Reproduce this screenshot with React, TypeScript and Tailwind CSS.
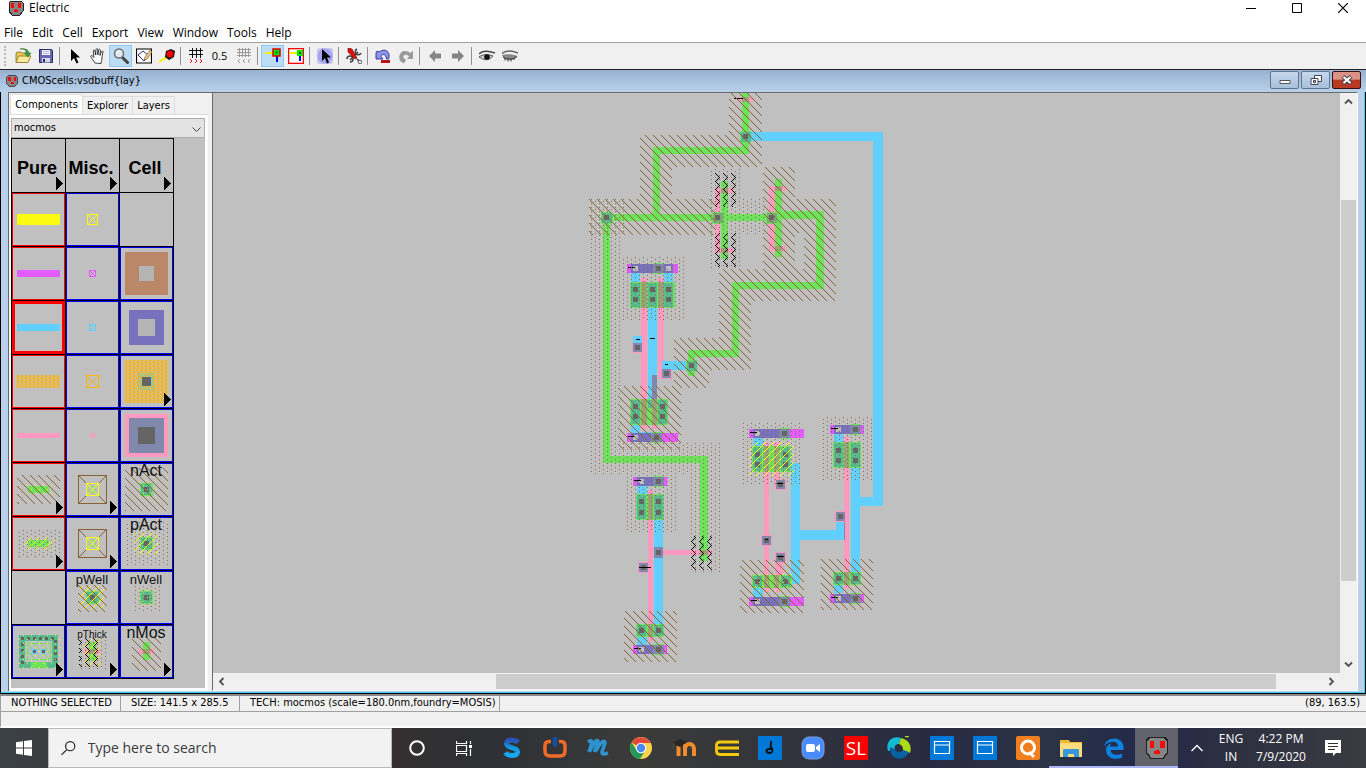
import React from "react";

type Box = [string, number, number, number, number];

const GREEN = "#6ee25c";
const CYAN = "#62d0ff";
const PINK = "#ff99c0";
const PURPLE = "#7872be";
const MAGENTA = "#e35cff";
const TEAL = "#57bb90";
const DARK = "#656565";
const LIGHT = "#bebebe";
const SLATE = "#8088ab";
const OLIVE = "#98a275";
const BLACK = "#000000";

/* Boxes are given as colour, left, top, right, bottom. */
function Boxes({ list }: { list: Box[] }) {
  return (
    <>
      {list.map(([fill, x1, y1, x2, y2], i) => (
        <rect key={i} fill={fill} x={x1} y={y1} width={x2 - x1} height={y2 - y1} />
      ))}
    </>
  );
}

function pixels(list: number[][]) {
  return list.map(([x, y]) => `M${x} ${y}h1v1h-1z`).join("");
}

const eight = [0, 1, 2, 3, 4, 5, 6, 7];
const hatchPath = pixels(eight.map((i) => [(6 + i) % 8, i]));
const slashPath = pixels(eight.map((i) => [(15 - i) % 8, i]));
const dotPath = pixels([[7, 3], [7, 7], [3, 1], [3, 5]]);
const sparsePath = pixels([[3, 2], [7, 6]]);
const zigPath = pixels([[3, 5], [4, 6], [5, 7], [6, 0], [7, 1], [6, 2], [5, 3], [4, 4]]);

function Patterns() {
  const defs: [string, string, string][] = [
    ["hatch", hatchPath, "#8a6230"],
    ["slash", slashPath, "#fbfb12"],
    ["dots", dotPath, "#8a6a48"],
    ["ydots", sparsePath, "#f4f41a"],
    ["zig", zigPath, "#000000"],
  ];
  return (
    <svg className="absolute size-0" aria-hidden="true">
      <defs>
        {defs.map(([id, d, fill]) => (
          <pattern key={id} id={id} width="8" height="8" patternUnits="userSpaceOnUse">
            <path d={d} fill={fill} shapeRendering="crispEdges" />
          </pattern>
        ))}
        <pattern id="orange" width="4" height="4" patternUnits="userSpaceOnUse">
          <path d="M1 0h2v4h-2z" fill="#ffb50a" shapeRendering="crispEdges" />
          <path d="M3 1h1v1h-1zM0 3h1v1h-1z" fill="#e8b648" shapeRendering="crispEdges" />
        </pattern>
      </defs>
    </svg>
  );
}

function contact(x: number, y: number, fill: string = TEAL): Box[] {
  return [
    [GREEN, x, y, x + 11, y + 12],
    [fill, x + 1, y + 1, x + 11, y + 11],
    [DARK, x + 3, y + 3, x + 8, y + 8],
  ];
}

function polyVia(x: number, y: number): Box[] {
  return [
    [PINK, x - 1, y - 1, x + 10, y + 10],
    [SLATE, x, y, x + 9, y + 9],
    [DARK, x + 2, y + 2, x + 7, y + 7],
  ];
}

/* A power rail: magenta bar, purple overlap, light via and dark via. */
function rail(x: number, y: number, right: number, purpleRight: number, via: number): Box[] {
  return [
    [MAGENTA, x, y, right, y + 9],
    [PURPLE, x + 4, y, purpleRight, y + 9],
    [GREEN, via - 3, y - 1, via + 8, y + 10],
    [SLATE, via - 3, y, via + 8, y + 9],
    [LIGHT, x + 6, y + 2, x + 11, y + 7],
    [DARK, via, y + 2, via + 5, y + 7],
    [BLACK, x + 1, y + 3, x + 8, y + 4],
  ];
}

function active(x: number, y: number, right: number, bottom: number, teal: number[], olive: number[][], rows: number[]): Box[] {
  const out: Box[] = [[GREEN, x, y, right, bottom]];
  teal.forEach((t) => out.push([TEAL, t, y + 1, t + 9, bottom - 1]));
  olive.forEach(([a, b]) => out.push([OLIVE, a, y, b, bottom]));
  teal.forEach((t) => rows.forEach((r) => out.push([DARK, t + 2, r, t + 7, r + 5])));
  return out;
}

const layout: Box[] = [
  [CYAN, 748, 132, 883, 141],
  [CYAN, 873, 132, 883, 506],
  [CYAN, 859, 497, 883, 506],
  [GREEN, 742, 93, 749, 154],
  [GREEN, 653, 147, 749, 154],
  [GREEN, 653, 147, 660, 221],
  [GREEN, 606, 214, 776, 221],
  [GREEN, 776, 211, 824, 219],
  [GREEN, 816, 211, 824, 289],
  [GREEN, 732, 282, 824, 289],
  [GREEN, 732, 282, 739, 357],
  [GREEN, 688, 350, 739, 357],
  [GREEN, 688, 350, 695, 376],
  [GREEN, 603, 214, 610, 463],
  [GREEN, 603, 456, 708, 463],
  [GREEN, 700, 456, 708, 561],
  [PINK, 739, 97, 753, 102],
  [OLIVE, 742, 97, 749, 102],
  [BLACK, 734, 98, 743, 99],
  [PINK, 715, 188, 720, 253],
  [PINK, 715, 188, 733, 193],
  [PINK, 715, 248, 733, 253],
  [GREEN, 721, 181, 728, 259],
  [OLIVE, 721, 188, 728, 193],
  [OLIVE, 721, 248, 728, 253],
  [PINK, 769, 186, 775, 251],
  [PINK, 769, 186, 786, 191],
  [PINK, 769, 246, 786, 251],
  [GREEN, 775, 179, 782, 257],
  [OLIVE, 775, 186, 782, 191],
  [OLIVE, 775, 246, 782, 251],
  ...contact(740, 131),
  ...contact(601, 212),
  ...contact(712, 212, "#7ea87c"),
  ...contact(766, 212, "#7ea87c"),

  [CYAN, 631, 273, 640, 282],
  [CYAN, 664, 273, 673, 282],
  [PINK, 641, 278, 647, 429],
  [PINK, 658, 278, 664, 379],
  [CYAN, 648, 307, 657, 400],
  ...rail(627, 264, 678, 673, 656),
  [LIGHT, 666, 266, 671, 271],
  ...active(630, 282, 675, 308, [631, 648, 664], [[641, 647], [658, 664]], [287, 297]),
  ...polyVia(633, 343),
  [CYAN, 633, 336, 642, 343],
  [BLACK, 636, 339, 640, 340],
  [BLACK, 650, 338, 655, 339],
  [CYAN, 662, 361, 688, 370],
  ...polyVia(662, 369),
  [CYAN, 662, 361, 672, 369],
  [BLACK, 665, 364, 668, 365],
  ...contact(686, 360),
  [SLATE, 652, 375, 657, 400],
  [CYAN, 631, 425, 640, 433],
  [PINK, 652, 425, 657, 429],
  [CYAN, 640, 432, 657, 433],
  ...active(630, 399, 668, 425, [631, 658], [[641, 647], [652, 657]], [404, 414]),
  [TEAL, 648, 400, 652, 408],
  ...rail(627, 433, 678, 661, 654),

  [CYAN, 637, 485, 647, 494],
  [PINK, 648, 490, 653, 641],
  [CYAN, 654, 520, 663, 624],
  ...rail(633, 477, 667, 653, 656),
  ...active(636, 494, 664, 520, [637, 654], [[648, 653]], [499, 510]),
  [PINK, 663, 550, 712, 555],
  [OLIVE, 700, 550, 708, 555],
  [SLATE, 654, 547, 663, 558],
  [DARK, 656, 550, 661, 555],
  ...polyVia(639, 563),
  [BLACK, 639, 567, 651, 568],
  [CYAN, 637, 637, 647, 645],
  ...active(636, 624, 664, 637, [637, 654], [[648, 653]], [628]),
  ...rail(633, 645, 667, 653, 656),

  [CYAN, 753, 438, 763, 446],
  [PINK, 764, 442, 769, 592],
  [PINK, 774, 442, 779, 487],
  ...rail(749, 429, 804, 790, 782),
  ...active(752, 446, 791, 472, [753, 781], [[764, 769], [774, 779]], [452, 462]),
  [CYAN, 791, 463, 800, 584],
  [CYAN, 800, 530, 844, 540],
  [CYAN, 836, 522, 844, 540],
  ...polyVia(776, 480),
  [BLACK, 777, 483, 784, 484],
  ...polyVia(762, 536),
  [BLACK, 765, 539, 768, 540],
  [PINK, 775, 562, 783, 576],
  [PINK, 775, 576, 779, 592],
  ...polyVia(776, 553),
  [BLACK, 777, 556, 784, 557],
  [CYAN, 753, 588, 763, 597],
  ...active(752, 575, 792, 588, [753, 781], [[764, 769], [774, 779]], [579]),
  ...rail(749, 597, 804, 790, 782),

  [CYAN, 834, 434, 843, 442],
  [PINK, 844, 437, 849, 589],
  [SLATE, 844, 522, 845, 540],
  ...rail(830, 425, 864, 850, 853),
  ...active(833, 442, 861, 468, [834, 851], [[844, 849]], [448, 458]),
  [CYAN, 851, 468, 860, 572],
  ...polyVia(836, 512),
  [CYAN, 834, 585, 843, 593],
  ...active(833, 572, 861, 585, [834, 851], [[844, 849]], [576]),
  ...rail(830, 594, 864, 850, 853),
];

const fills: Box[] = [
  ["url(#hatch)", 729, 93, 762, 135],
  ["url(#hatch)", 640, 135, 762, 167],
  ["url(#hatch)", 640, 167, 672, 199],
  ["url(#hatch)", 589, 199, 715, 235],
  ["url(#hatch)", 763, 167, 795, 269],
  ["url(#hatch)", 795, 199, 836, 233],
  ["url(#hatch)", 804, 233, 836, 269],
  ["url(#hatch)", 719, 269, 836, 301],
  ["url(#hatch)", 719, 301, 751, 338],
  ["url(#hatch)", 674, 338, 751, 370],
  ["url(#hatch)", 674, 370, 709, 388],
  ["url(#hatch)", 618, 386, 681, 450],
  ["url(#hatch)", 624, 611, 677, 662],
  ["url(#hatch)", 740, 560, 804, 613],
  ["url(#hatch)", 821, 559, 873, 610],
  ["url(#dots)", 589, 199, 625, 235],
  ["url(#dots)", 590, 235, 621, 443],
  ["url(#dots)", 590, 443, 720, 474],
  ["url(#dots)", 690, 474, 720, 573],
  ["url(#dots)", 711, 169, 741, 268],
  ["url(#dots)", 741, 199, 766, 235],
  ["url(#dots)", 621, 257, 685, 320],
  ["url(#dots)", 627, 474, 677, 532],
  ["url(#dots)", 743, 423, 801, 485],
  ["url(#dots)", 823, 417, 873, 481],
  ["url(#slash)", 749, 442, 794, 476],
  ["url(#ydots)", 752, 571, 793, 592],
  ["url(#zig)", 715, 173, 736, 207],
  ["url(#zig)", 715, 233, 736, 267],
  ["url(#zig)", 691, 536, 712, 570],
];

/* ---------- palette ---------- */

function XBox({ a, b, color }: { a: number; b: number; color: string }) {
  return (
    <path
      d={`M${a + 0.5} ${a + 0.5}H${b - 0.5}V${b - 0.5}H${a + 0.5}ZL${b - 0.5} ${b - 0.5}M${b - 0.5} ${a + 0.5}L${a + 0.5} ${b - 0.5}`}
      fill="none"
      stroke={color}
    />
  );
}

function Label({ text, size }: { text: string; size: number }) {
  return (
    <text x="26" y="13" fontSize={size} textAnchor="middle" fill="#111">
      {text}
    </text>
  );
}

function Heading({ text }: { text: string }) {
  return (
    <text x="25" y="35" fontSize="18" fontWeight="700" textAnchor="middle" fill="#000">
      {text}
    </text>
  );
}

const chip: Box[] = [
  [GREEN, 20, 20, 33, 33],
  [TEAL, 21, 21, 32, 32],
  [DARK, 24, 24, 29, 29],
];

const wellPin = (
  <>
    <XBox a={12} b={41} color="#8a6230" />
    <rect x="20" y="20" width="13" height="13" fill="#c0c0c0" />
    <rect x="23.5" y="23.5" width="6" height="6" fill="none" stroke="#7be56a" />
    <XBox a={20} b={33} color="#fbfb12" />
  </>
);

type Tile = { name: string; ring: "none" | "red" | "blue" | "selected"; arrow?: boolean; art?: React.ReactNode };

const tiles: Tile[] = [
  { name: "Pure", ring: "none", arrow: true, art: <Heading text="Pure" /> },
  { name: "Misc.", ring: "none", arrow: true, art: <Heading text="Misc." /> },
  { name: "Cell", ring: "none", arrow: true, art: <Heading text="Cell" /> },

  { name: "Metal-4 arc", ring: "red", art: <Boxes list={[["#fbfb12", 5, 21, 48, 32]]} /> },
  { name: "Metal-4 pin", ring: "blue", art: <XBox a={21} b={32} color="#fbfb12" /> },
  { name: "Empty", ring: "none" },

  { name: "Metal-2 arc", ring: "red", art: <Boxes list={[[MAGENTA, 5, 23, 48, 30]]} /> },
  { name: "Metal-2 pin", ring: "blue", art: <XBox a={23} b={30} color={MAGENTA} /> },
  { name: "Metal-3 contact", ring: "blue", art: <Boxes list={[["#ba8769", 5, 5, 48, 48], ["#b4b4b4", 19, 19, 34, 34]]} /> },

  { name: "Metal-1 arc", ring: "selected", art: <Boxes list={[[CYAN, 5, 23, 48, 30]]} /> },
  { name: "Metal-1 pin", ring: "blue", art: <XBox a={23} b={30} color={CYAN} /> },
  { name: "Metal-1-Metal-2 contact", ring: "blue", art: <Boxes list={[[PURPLE, 9, 9, 44, 44], ["#b4b4b4", 18, 18, 35, 35]]} /> },

  { name: "Polysilicon-2 arc", ring: "red", art: <Boxes list={[["url(#orange)", 5, 20, 48, 33]]} /> },
  { name: "Polysilicon-2 pin", ring: "blue", art: <XBox a={20} b={33} color="#ffb50a" /> },
  {
    name: "Polysilicon-2 contact", ring: "blue", arrow: true,
    art: <Boxes list={[["url(#orange)", 5, 5, 48, 48], [CYAN, 18, 18, 35, 35], ["url(#orange)", 18, 18, 35, 35], [DARK, 22, 22, 31, 31]]} />,
  },

  { name: "Polysilicon-1 arc", ring: "red", art: <Boxes list={[[PINK, 5, 24, 48, 29]]} /> },
  { name: "Polysilicon-1 pin", ring: "blue", art: <XBox a={24} b={29} color={PINK} /> },
  { name: "Polysilicon-1 contact", ring: "blue", art: <Boxes list={[[PINK, 5, 5, 48, 48], [SLATE, 9, 9, 44, 44], [DARK, 18, 18, 35, 35]]} /> },

  { name: "N-Active arc", ring: "red", arrow: true, art: <Boxes list={[[GREEN, 16, 23, 37, 30], ["url(#hatch)", 5, 12, 48, 41], ["url(#ydots)", 14, 20, 40, 33]]} /> },
  { name: "N-Active pin", ring: "blue", arrow: true, art: wellPin },
  { name: "N-Active contact", ring: "blue", art: <><Boxes list={[...chip, ["url(#hatch)", 5, 5, 48, 48], ["url(#ydots)", 17, 17, 36, 36]]} /><Label text="nAct" size={16} /></> },

  { name: "P-Active arc", ring: "red", arrow: true, art: <Boxes list={[[GREEN, 16, 23, 37, 30], ["url(#dots)", 5, 12, 48, 41], ["url(#slash)", 12, 20, 41, 33]]} /> },
  { name: "P-Active pin", ring: "blue", arrow: true, art: wellPin },
  { name: "P-Active contact", ring: "blue", art: <><Boxes list={[...chip, ["url(#dots)", 5, 5, 48, 48], ["url(#slash)", 14, 15, 38, 38]]} /><Label text="pAct" size={16} /></> },

  { name: "Empty", ring: "none" },
  { name: "P-Well contact", ring: "blue", art: <><Boxes list={[...chip, ["url(#hatch)", 12, 14, 41, 41], ["url(#slash)", 14, 15, 38, 38]]} /><Label text="pWell" size={13} /></> },
  { name: "N-Well contact", ring: "blue", art: <><Boxes list={[...chip, ["url(#dots)", 12, 14, 41, 41], ["url(#ydots)", 16, 16, 37, 37]]} /><Label text="nWell" size={13} /></> },

  {
    name: "NPN transistor", ring: "blue", arrow: true,
    art: (
      <>
        <Boxes list={[[TEAL, 7, 10, 46, 43], ["#c0c0c0", 13, 16, 40, 37], [GREEN, 19, 37, 35, 43]]} />
        <path d="M10.5 39V13H43V39" fill="none" stroke={DARK} strokeWidth="3" strokeDasharray="3 3" />
        <path d="M16 20l14 14M22 19l15 15M29 19l9 9M16 27l7 7" stroke={GREEN} />
        <rect x="15.500" y="18.500" width="23" height="16" fill="none" stroke={GREEN} />
        <Boxes list={[[CYAN, 19, 24, 25, 29], [CYAN, 29, 24, 34, 29], [DARK, 21, 25, 24, 28], [DARK, 30, 25, 33, 28], ["url(#ydots)", 7, 9, 48, 46]]} />
      </>
    ),
  },
  {
    name: "Thick transistor", ring: "blue", arrow: true,
    art: (
      <>
        <Boxes list={[[PINK, 18, 24, 34, 29], [GREEN, 23, 17, 30, 36], [OLIVE, 23, 24, 30, 29], ["url(#dots)", 12, 10, 40, 44], ["url(#slash)", 18, 14, 35, 41], ["url(#zig)", 13, 13, 35, 42]]} />
        <Label text="pThick" size={10} />
      </>
    ),
  },
  {
    name: "nMos transistor", ring: "blue", arrow: true,
    art: (
      <>
        <Boxes list={[[PINK, 19, 24, 34, 29], [GREEN, 23, 17, 30, 35], [OLIVE, 23, 24, 30, 29], ["url(#hatch)", 12, 12, 41, 46]]} />
        <Label text="nMos" size={16} />
      </>
    ),
  },
];

const ringClass = {
  none: "border border-transparent",
  red: "border border-[#fb0000]",
  blue: "border border-[#0000f5]",
  selected: "border-[3px] border-[#fb0000]",
};

function Palette() {
  return (
    <div className="grid w-max grid-cols-3 border-r border-b border-black">
      {tiles.map((t, i) => (
        <button key={i} type="button" aria-label={t.name} className="relative size-[54px] border-t border-l border-black">
          <svg className="block size-[53px]" viewBox="0 0 53 53" fontFamily="'Liberation Sans', Arial, sans-serif" shapeRendering="crispEdges">
            {t.art}
            {t.arrow && <path d="M44 38L51 44.5L44 51Z" fill="#000" />}
          </svg>
          <span className={`absolute inset-0 ${ringClass[t.ring]}`} />
        </button>
      ))}
    </div>
  );
}

/* ---------- icons ---------- */

function Outlet({ className }: { className: string }) {
  return (
    <svg className={className} viewBox="0 0 16 16" shapeRendering="crispEdges">
      <path d="M3 1h10l2 2v8l-3 4H4L1 11V3z" fill="#858585" stroke="#222" />
      <path d="M3 3h3v5H3zM10 3h3v5h-3zM7 9h2v1h1v2H6v-2h1z" fill="#fb0808" />
    </svg>
  );
}

const icons: Record<string, React.ReactNode> = {
  open: (
    <>
      <path d="M1 6l1-2h4l1 1h5v9H1z" fill="#e8c95a" stroke="#8d6d1d" strokeWidth=".8" />
      <path d="M1 14.5L3.5 8H16l-3 6.5z" fill="#f9e99a" stroke="#8d6d1d" strokeWidth=".8" />
      <path d="M5 1c4-.5 6 1 6.500 4H9.500l3.500 4 3-4h-2C13.500 1.500 10 0 5 1z" fill="#3f9f3a" stroke="#1d5f1d" strokeWidth=".5" />
    </>
  ),
  save: (
    <>
      <path d="M1.500 1.500h12l1 1v12h-13z" fill="#6a66b4" stroke="#29296d" />
      <path d="M4 2h8v5H4z" fill="#f4f4fb" />
      <path d="M4 10h8v4.500H4z" fill="#d8d8e6" />
      <path d="M5 11h2v3H5z" fill="#29296d" />
      <path d="M5 3.500h6M5 5.500h6" stroke="#a0a0c0" strokeWidth=".7" />
    </>
  ),
  cursor: <path d="M4 1v12l3-3 2.500 5.500 2-1L9 9.500h4z" fill="#000" />,
  hand: <path d="M5 15c-1-2-3-4-4.300-6.500C1 7 2.500 7.500 4 9.500L3.200 3c.4-1.400 1.500-1 1.700 0l.8 4L6 1.500c.5-1.300 1.700-1 1.800 0V7l.8-5c.5-1.200 1.600-.8 1.700.2L10 7.500l1.500-4c.7-1 1.700-.5 1.500.5l-1 5c0 3-.6 4-1 6.500z" fill="#fff" stroke="#111" strokeWidth=".8" />,
  zoom: (
    <>
      <path d="M9.500 9.500l5 5" stroke="#444" strokeWidth="3" strokeLinecap="round" />
      <circle cx="6" cy="5.500" r="4.500" fill="#e1e8f0" stroke="#707070" strokeWidth="1.500" />
      <path d="M4 4.500l2-1.500" stroke="#fff" strokeWidth="1.500" />
    </>
  ),
  outline: (
    <>
      <path d="M.5 1h15v14H.5z" fill="#fff" stroke="#000" strokeWidth="1.200" />
      <path d="M2 7l5-4 6 5-5 5z" fill="none" stroke="#1e2c8c" />
      <path d="M9 9l5-7 2 2-5 7-3 1z" fill="#e6c684" stroke="#7b5527" strokeWidth=".6" />
    </>
  ),
  probe: (
    <>
      <path d="M0 14l5-3 4-2" stroke="#f2f200" strokeWidth="2" fill="none" />
      <path d="M7 3l5-2 4 2-1 6-5 3-4-3z" fill="#111" />
      <circle cx="11" cy="6" r="3.500" fill="#f20000" />
    </>
  ),
  grid: (
    <>
      <path d="M1 2.500h14M1 6.500h14M4.500 0v10M8.500 0v10M12.500 0v10" stroke="#111" fill="none" />
      <path d="M2 11l2 2-2 2M7 11l2 2-2 2M12 11l2 2-2 2" stroke="#e11" fill="none" />
    </>
  ),
  gridGray: (
    <>
      <path d="M1 1.500h14M1 4.500h14M1 7.500h14M3.500 0v9M6.500 0v9M9.500 0v9M12.500 0v9" stroke="#9a9a9a" fill="none" />
      <path d="M4 11l-2 2 2 2M9 11l-2 2 2 2M14 11l-2 2 2 2" stroke="#999" fill="none" />
    </>
  ),
  arcIn: (
    <>
      <path d="M0 5h8" stroke="#f4f400" strokeWidth="2" />
      <path d="M12 8v6" stroke="#0000f0" strokeWidth="2" />
      <path d="M8 1h7v7H8z" fill="#00e800" stroke="#e00000" strokeWidth="1.500" />
      <path d="M10.500 3.500h2v2h-2z" fill="#063" />
    </>
  ),
  arcOut: (
    <>
      <path d="M.5.500h15v15H.5z" fill="#f8f8f8" stroke="#f00" strokeWidth="1.500" />
      <path d="M1 5h8" stroke="#f4f400" strokeWidth="2" />
      <path d="M12 8v5" stroke="#0000f0" strokeWidth="2" />
      <path d="M9 2h6v6H9z" fill="#00e800" />
      <path d="M11 4h2v2h-2z" fill="#063" />
    </>
  ),
  select: (
    <>
      <circle cx="8" cy="8" r="7.500" fill="#9c9cf4" />
      <rect x="0" y="0" width="16" height="16" rx="3" fill="#a8a8f0" opacity=".6" />
      <path d="M5 1v12l3-3 2 5.500 2-1-2-5h4z" fill="#000" />
    </>
  ),
  tools: (
    <>
      <path d="M4 12L12 4M1 11a3 3 0 1 1 3 3M11 1a3 3 0 1 0 4 4M11 11l2 2" stroke="#444" strokeWidth="1.600" fill="none" />
      <circle cx="14" cy="14" r="1.800" fill="#fff" stroke="#555" />
      <path d="M2 0l4 1 5 9-2 1-7-7z" fill="#e01010" stroke="#700" strokeWidth=".6" />
    </>
  ),
  undo: (
    <>
      <path d="M1 5v6h7L6 8.500c1-3 5-3 5.500 2.500h2C16 5 11-1 4 4L2 3z" fill="#8c94e6" stroke="#2b2b9b" strokeWidth=".9" />
      <path d="M6 12h9v3H6z" fill="#b8141c" />
    </>
  ),
  redo: <path d="M15 3v8H9l2-2.500C9 6 6 6 5 9l3 3-2 3.500L2 13C-1 5 6 0 12 5z" fill="#9a9a9a" />,
  left: <path d="M2 8l6-6v3.500h6v5H8V14z" fill="#858585" />,
  right: <path d="M14 8L8 2v3.500H2v5h6V14z" fill="#858585" />,
  eye: (
    <>
      <path d="M0 6c4-4 10-3 16-1" stroke="#444" strokeWidth="1.500" fill="none" />
      <path d="M0 9c4-3 9-3 14-1-3 4-8 5-12 2z" fill="#ccc" stroke="#555" />
      <circle cx="8" cy="9" r="2.800" fill="#111" />
    </>
  ),
  eyeShut: (
    <>
      <path d="M0 5.500c4-3 10-3 16-.5" stroke="#666" strokeWidth="1.500" fill="none" />
      <path d="M0 7c4-1 11-1 15.500 1-2 4-12 5-14.500 1z" fill="#888" />
      <path d="M1 9c4 3 10 3 14-.5M3 10v2.500M6 11v2.500M9 11v2.500M12 10v2" stroke="#333" fill="none" />
    </>
  ),
};

type Tool = { id: string; label: string; on?: boolean };
const toolGroups: Tool[][] = [
  [{ id: "open", label: "Open" }, { id: "save", label: "Save" }],
  [
    { id: "cursor", label: "Click and drag" },
    { id: "hand", label: "Pan" },
    { id: "zoom", label: "Zoom", on: true },
    { id: "outline", label: "Outline" },
    { id: "probe", label: "Measure" },
  ],
  [{ id: "grid", label: "Coarser grid" }, { id: "0.5", label: "Grid alignment" }, { id: "gridGray", label: "Finer grid" }],
  [{ id: "arcIn", label: "Select objects", on: true }, { id: "arcOut", label: "Select area" }],
  [{ id: "select", label: "Special select" }],
  [{ id: "tools", label: "Preferences" }],
  [{ id: "undo", label: "Undo" }, { id: "redo", label: "Redo" }],
  [{ id: "left", label: "Back" }, { id: "right", label: "Forward" }],
  [{ id: "eye", label: "Expand cells" }, { id: "eyeShut", label: "Unexpand cells" }],
];

function Toolbar() {
  return (
    <div className="flex h-7 shrink-0 items-center border-t border-b border-t-[#a0a0a0] border-b-[#222] bg-[#f0f0f0] pl-1">
      <div className="mr-[5px] h-5 w-[2px] border-l-2 border-dotted border-[#b8b8b8]" />
      {toolGroups.map((group, g) => (
        <React.Fragment key={g}>
          {g > 0 && <div className="mx-[2px] h-[18px] w-[2px] border-l border-[#8f8f8f]" />}
          {group.map((t) =>
            t.id === "0.5" ? (
              <button key={t.id} type="button" aria-label={t.label} className="w-[25px] text-[11px]">0.5</button>
            ) : (
              <button
                key={t.id}
                type="button"
                aria-label={t.label}
                className={`flex h-[22px] w-[23px] items-center justify-center border ${t.on ? "border-[#90c8f6] bg-[#bcdcf4]" : "border-transparent"}`}
              >
                <svg className="size-4" viewBox="0 0 16 16">{icons[t.id]}</svg>
              </button>
            ),
          )}
        </React.Fragment>
      ))}
    </div>
  );
}

function ScrollArrow({ d, label }: { d: string; label: string }) {
  return (
    <button type="button" aria-label={label} className="flex size-[17px] shrink-0 items-center justify-center">
      <svg className="size-[9px]" viewBox="0 0 9 9">
        <path d={d} fill="none" stroke="#505050" strokeWidth="1.800" />
      </svg>
    </button>
  );
}

const windowGlyph = (
  <>
    <path d="M0 0h24v24H0z" fill="#0078d7" />
    <path d="M4.500 5.500h15v12h-15zM4.500 9h15" stroke="#fff" fill="none" strokeWidth="1.200" />
  </>
);

const apps: { label: string; open?: boolean; active?: boolean; art: React.ReactNode }[] = [
  {
    label: "Skype",
    art: (
      <>
        <linearGradient id="sg" x1="0" y1="0" x2="0" y2="1">
          <stop offset="0" stopColor="#2b4fb8" />
          <stop offset=".5" stopColor="#0f9be0" />
          <stop offset="1" stopColor="#16a9ee" />
        </linearGradient>
        <path d="M18 6.500C16 3.500 7 2.500 6.500 7.500c0 5 11.500 3.500 11 8.500-.5 5-10 4-12 .5" fill="none" stroke="url(#sg)" strokeWidth="5" />
      </>
    ),
  },
  {
    label: "Power",
    art: (
      <>
        <path d="M8 5.500H6Q2 5.500 2 10v5q0 5 5 5h10q5 0 5-5v-5q0-4.500-4-4.500h-2" fill="none" stroke="#f26a28" strokeWidth="3.500" />
        <path d="M9.500 1h5v8l-2.500 2-2.500-2z" fill="#12509c" />
      </>
    ),
  },
  {
    label: "Maxthon",
    art: <path d="M2 6c5-3 5-1 1 10M4 15C7 7 12 2 12 6L8.500 16M10 15c4-9 9-12 9-8l-3 9c0 3 3 2 6 1" fill="none" stroke="#2d93cf" strokeWidth="3.600" />,
  },
  {
    label: "Chrome",
    art: (
      <>
        <circle cx="12" cy="12" r="11" fill="#fcd34f" />
        <path d="M12 12L2.500 6.500A11 11 0 0 1 21.600 7H12z" fill="#e2493b" />
        <path d="M2.500 6.500A11 11 0 0 0 11 23l5.500-9L12 12 7.500 14z" fill="#239957" />
        <circle cx="12" cy="12" r="5.200" fill="#fff" />
        <circle cx="12" cy="12" r="4.200" fill="#4a8af4" />
      </>
    ),
  },
  {
    label: "Moodle",
    art: (
      <>
        <path d="M6.500 20V10M13 20v-7q.5-5 4.500-5t4.500 5v7M13 8v12" fill="none" stroke="#ef8b2c" strokeWidth="4" />
        <path d="M0 7l8-4 7 3-7 5z" fill="#2a2422" />
        <path d="M1.500 7v6" stroke="#5a4a40" />
      </>
    ),
  },
  { label: "Eclipse", art: <path d="M24 6H5Q1.500 6 1.500 9v6q0 3.500 3.500 3.500h19M2 12h22" fill="none" stroke="#f6c90c" strokeWidth="2.800" /> },
  {
    label: "Ebook",
    art: (
      <>
        <path d="M0 0h24v24H0z" fill="#0078d7" />
        <path d="M12.500 5c2.500 3-2 5 1 7 2 2 1 5-2 5-4 0-4-4 0-4h3" fill="none" stroke="#111" strokeWidth="2" />
      </>
    ),
  },
  {
    label: "Zoom",
    art: (
      <>
        <rect x="1" y="1" width="22" height="22" rx="7" fill="#4a8cff" stroke="#7b9fd8" />
        <rect x="5" y="8" width="9" height="8" rx="2" fill="#fff" />
        <path d="M15 11l4-3v8l-4-3z" fill="#fff" />
      </>
    ),
  },
  {
    label: "SL",
    art: (
      <>
        <path d="M0 0h24v24H0z" fill="#fb0000" />
        <text x="12" y="19" fontSize="19" textAnchor="middle" fill="#fff" fontFamily="'Open Sans', sans-serif">SL</text>
      </>
    ),
  },
  {
    label: "Browser",
    art: (
      <>
        <path d="M1 15C-2 5 6-1 14 2l-2 6c-4 0-5 3-4 5z" fill="#13bad3" />
        <path d="M14 2c9 2 11 9 9 15l-7-3c0-3-1-5-4-6z" fill="#aadc17" />
        <path d="M3 11l5 2c1 4 6 4 8 1l6 2c-4 10-20 9-19-5z" fill="#0763a0" />
        <path d="M18 .5h4" stroke="#aadc17" strokeWidth="1.500" />
      </>
    ),
  },
  { label: "Window 1", art: windowGlyph },
  { label: "Window 2", art: windowGlyph },
  {
    label: "Quicker",
    art: (
      <>
        <rect width="24" height="24" rx="2" fill="#f0801e" />
        <circle cx="12" cy="11.500" r="6.500" fill="none" stroke="#fff" strokeWidth="2.800" />
        <path d="M13 16l5 5" stroke="#fff" strokeWidth="2.800" />
      </>
    ),
  },
  {
    label: "File Explorer", open: true,
    art: (
      <>
        <path d="M1 4h9l1 2h12v15H1z" fill="#f0b92f" />
        <path d="M1 7h22v14H1z" fill="#ffdc7d" />
        <path d="M4 21v-7q0-1 1-1h14q1 0 1 1v7h-5v-3H9v3z" fill="#3896dc" />
      </>
    ),
  },
  {
    label: "Edge", open: true,
    art: <path d="M2 10C4 1 19-1 21.500 9.500V14H8.500c.5 5 7 6 11.500 3.500v4C12 25 4 21.500 4 14c0-4 3-6 6-7-2 2-2 3-2 3.500h8C16 4 7 4.500 2 10z" fill="#0b81e0" />,
  },
  { label: "Electric", open: true, active: true, art: null },
];

function Taskbar() {
  return (
    <footer className="flex h-10 shrink-0 items-stretch overflow-hidden bg-[linear-gradient(90deg,#3b4044_0%,#33302f_29%,#2e3035_36%,#3b3b3a_47%,#34353a_56%,#272a42_68%,#2c3446_76%,#22294a_84%,#2c3040_90%,#3a3c42_100%)] font-['Open_Sans',sans-serif] text-white">
      <button type="button" aria-label="Start" className="flex w-12 shrink-0 items-center justify-center">
        <svg className="size-4" viewBox="0 0 16 16" fill="#fff">
          <path d="M0 2.200L7 1.200V7.500H0zM8 1L16 0V7.500H8zM0 8.500H7V14.800L0 13.800zM8 8.500H16V16L8 15z" />
        </svg>
      </button>
      <label className="flex w-[344px] shrink-0 items-center gap-3 border border-[#b8b8b8] bg-[#f2f2f2] pl-3">
        <svg className="size-4" viewBox="0 0 16 16" fill="none" stroke="#222" strokeWidth="1.300">
          <circle cx="10" cy="6" r="5" />
          <path d="M6.300 9.700L.5 15.500" />
        </svg>
        <input aria-label="Search" placeholder="Type here to search" className="w-full bg-transparent text-sm outline-none placeholder:text-[#3a3a3a]" />
      </label>
      <button type="button" aria-label="Cortana" className="ml-[3px] flex w-[43px] shrink-0 items-center justify-center">
        <svg className="size-4" viewBox="0 0 16 16"><circle cx="8" cy="8" r="6.800" fill="none" stroke="#fff" strokeWidth="2" /></svg>
      </button>
      <button type="button" aria-label="Task view" className="flex w-[52px] shrink-0 items-center justify-center">
        <svg className="size-4" viewBox="0 0 16 16" fill="none" stroke="#fff" strokeWidth="1.200">
          <path d="M.5 1v2.500h10V1M.5 5.500h10v6h-10zM.5 16v-2.500h10V16M14.500 1v3M14.500 9v7" />
          <path d="M13 5h3v3h-3z" fill="#fff" stroke="none" />
        </svg>
      </button>
      {apps.map((a) => (
        <button
          key={a.label}
          type="button"
          aria-label={a.label}
          className={`flex w-[43px] shrink-0 items-center justify-center border-b-2 pt-[2px] ${a.open ? "border-[#a9b5f5]" : "border-transparent"} ${a.active ? "bg-[#62626c]" : ""}`}
        >
          {a.art ? <svg className="size-6" viewBox="0 0 24 24">{a.art}</svg> : <Outlet className="size-6" />}
        </button>
      ))}
      <div className="ml-auto flex items-center text-[12px] leading-[18px]">
        <button type="button" aria-label="Hidden icons" className="mr-[14px]">
          <svg className="block size-3" viewBox="0 0 12 12"><path d="M.5 9L6 3.500 11.500 9" fill="none" stroke="#fff" strokeWidth="1.400" /></svg>
        </button>
        <div className="w-7 text-center">ENG<br />IN</div>
        <div className="mx-2 w-14 text-center whitespace-nowrap">4:22 PM<br />7/9/2020</div>
        <button type="button" aria-label="Notifications" className="mr-[25px] ml-2">
          <svg className="block size-4" viewBox="0 0 16 16">
            <path d="M0 0h16v13h-5l-3 3v-3H0z" fill="#fff" />
            <path d="M3 3.500h10M3 6.500h10M3 9.500h7" stroke="#333" />
          </svg>
        </button>
      </div>
    </footer>
  );
}

const menus = ["File", "Edit", "Cell", "Export", "View", "Window", "Tools", "Help"];

export default function App() {
  return (
    <div className="flex h-screen flex-col overflow-hidden bg-white font-['Open_Sans','Noto_Sans',sans-serif] text-[12px] text-black">
      <Patterns />
      <header className="flex h-4 shrink-0 items-center">
        <Outlet className="ml-2 size-4" />
        <h1 className="ml-[5px] leading-4">Electric</h1>
        <div className="ml-auto flex items-center gap-9 pr-[18px]">
          <button type="button" aria-label="Minimize">
            <svg className="block size-[10px]" viewBox="0 0 10 10"><path d="M0 5.500h10" stroke="#000" /></svg>
          </button>
          <button type="button" aria-label="Maximize">
            <svg className="block size-[10px]" viewBox="0 0 10 10"><path d="M.5.500h9v9h-9z" fill="none" stroke="#000" /></svg>
          </button>
          <button type="button" aria-label="Close">
            <svg className="block size-[10px]" viewBox="0 0 10 10"><path d="M0 0l10 10M10 0L0 10" stroke="#000" strokeWidth="1.200" /></svg>
          </button>
        </div>
      </header>
      <nav className="mt-2 flex h-[18px] shrink-0 items-center gap-[9px] pl-1">
        {menus.map((m) => (
          <button key={m} type="button" className="leading-4">{m}</button>
        ))}
      </nav>
      <Toolbar />

      <div className="flex h-[22px] shrink-0 items-center bg-linear-to-b from-[#97b1cf] to-[#b9d1ea] pl-[6px] font-['DejaVu_Sans_Condensed','Open_Sans',sans-serif]">
        <Outlet className="size-3" />
        <h2 className="ml-1 text-[11px] leading-4">CMOScells:vsdbuff{"{lay}"}</h2>
        <div className="ml-auto flex gap-[2px] pr-[5px] pb-[2px]">
          <button type="button" aria-label="Minimize window" className="flex h-[18px] w-[29px] items-center justify-center rounded-[2px] border border-[#5f7590] bg-linear-to-b from-[#c6d9ee] to-[#a6bfdb]">
            <svg className="size-3" viewBox="0 0 12 12"><path d="M1 6.500h10v3H1z" fill="#fff" stroke="#555" /></svg>
          </button>
          <button type="button" aria-label="Restore window" className="flex h-[18px] w-[29px] items-center justify-center rounded-[2px] border border-[#5f7590] bg-linear-to-b from-[#c6d9ee] to-[#a6bfdb]">
            <svg className="size-3" viewBox="0 0 12 12">
              <path d="M4.500 1.500h7v6h-7z" fill="#fff" stroke="#445" />
              <path d="M1 4.500h7v6H1z" fill="#fff" stroke="#445" />
              <path d="M3.500 6.500h2v2h-2z" fill="#aac" stroke="#445" />
            </svg>
          </button>
          <button type="button" aria-label="Close window" className="flex h-[18px] w-[29px] items-center justify-center rounded-[2px] border border-[#3a0f14] bg-linear-to-b from-[#dc9385] from-45% to-[#b93a22] to-50%">
            <svg className="size-3" viewBox="0 0 12 12">
              <path d="M2 2.500l8 7M10 2.500l-8 7" stroke="#445" strokeWidth="4" />
              <path d="M2.500 3l7 6M9.500 3l-7 6" stroke="#fff" strokeWidth="2.200" />
            </svg>
          </button>
        </div>
      </div>

      <main className="flex min-h-0 flex-1 flex-col border-r border-b border-l border-black bg-[#b9d1ea] font-['DejaVu_Sans_Condensed','Open_Sans',sans-serif]">
        <div className="flex min-h-0 flex-1 border-r border-b border-[#35d3ee] pr-[6px] pb-px pl-[7px]">
          <aside className="flex w-[201px] shrink-0 flex-col border-t border-l border-[#696969] bg-[#f0f0f0] pr-px pl-px">
            <div className="flex h-[22px] shrink-0 items-end border-b border-[#dcdcdc] pt-[2px] text-[11px]" role="tablist">
              <button role="tab" aria-selected="true" type="button" className="h-5 w-[73px] border border-b-0 border-[#dcdcdc] bg-white leading-4">Components</button>
              <button role="tab" aria-selected="false" type="button" className="h-[18px] w-[50px] border-t border-r border-[#dcdcdc] leading-4">Explorer</button>
              <button role="tab" aria-selected="false" type="button" className="h-[18px] w-[42px] border-t border-r border-[#dcdcdc] leading-4">Layers</button>
            </div>
            <div className="flex min-h-0 flex-1 flex-col border-r border-b border-[#fafafa] bg-white pt-[3px] pr-[2px] pb-[2px] pl-px">
              <div className="relative shrink-0">
                <select aria-label="Technology" className="block h-5 w-full appearance-none border border-[#adadad] bg-[#e3e3e3] pl-[2px] text-[11px] outline-none">
                  <option>mocmos</option>
                </select>
                <svg className="pointer-events-none absolute top-[7px] right-1 size-[9px]" viewBox="0 0 9 9">
                  <path d="M.5 2.500l4 4 4-4" fill="none" stroke="#444" />
                </svg>
              </div>
              <div className="min-h-0 flex-1 overflow-hidden bg-[#c0c0c0]">
                <Palette />
              </div>
            </div>
          </aside>
          <div className="w-[3px] shrink-0 border-t border-[#696969] bg-[#f0f0f0]" />
          <section className="flex min-w-0 flex-1 flex-col border-t border-r border-b border-l border-t-[#696969] border-r-white border-b-white border-l-[#696969] bg-[#f0f0f0]">
            <div className="flex min-h-0 flex-1">
              <div className="min-w-0 flex-1 overflow-hidden bg-[#c0c0c0]">
                <svg className="block h-[580px] w-[1127px]" viewBox="213 93 1127 580" shapeRendering="crispEdges" role="img" aria-label="Cell layout">
                  <Boxes list={layout} />
                  <Boxes list={fills} />
                </svg>
              </div>
              <div className="flex w-[17px] shrink-0 flex-col">
                <ScrollArrow label="Scroll up" d="M1 6.500L4.500 3 8 6.500" />
                <div className="flex min-h-0 flex-1 flex-col">
                  <div className="grow-[90]" />
                  <div className="mx-px grow-[381] bg-[#cdcdcd]" />
                  <div className="grow-[75]" />
                </div>
                <ScrollArrow label="Scroll down" d="M1 2.500L4.500 6 8 2.500" />
              </div>
            </div>
            <div className="flex h-[17px] shrink-0 pr-[17px]">
              <ScrollArrow label="Scroll left" d="M6.500 1L3 4.500 6.500 8" />
              <div className="flex min-w-0 flex-1 py-px">
                <div className="grow-[266]" />
                <div className="grow-[780] bg-[#cdcdcd]" />
                <div className="grow-[47]" />
              </div>
              <ScrollArrow label="Scroll right" d="M2.500 1L6 4.500 2.500 8" />
            </div>
          </section>
        </div>
      </main>

      <div className="flex h-[18px] shrink-0 border-t-2 border-b border-t-[#8a8a8a] border-b-[#a0a0a0] bg-[#f0f0f0] font-['DejaVu_Sans_Condensed','Open_Sans',sans-serif] text-[11px] leading-[14px]">
        <div className="w-[121px] border-r border-l border-[#a0a0a0] pl-[10px]">NOTHING SELECTED</div>
        <div className="w-[119px] border-r border-[#a0a0a0] pl-[10px]">SIZE: 141.5 x 285.5</div>
        <div className="w-[260px] border-r border-[#a0a0a0] pl-[10px] whitespace-nowrap">TECH: mocmos (scale=180.0nm,foundry=MOSIS)</div>
        <div className="ml-auto pr-[6px]">(89, 163.5)</div>
      </div>
      <div className="h-4 shrink-0 border-b-2 border-l border-b-white border-l-[#a0a0a0] bg-[#f0f0f0]" />
      <Taskbar />
    </div>
  );
}
